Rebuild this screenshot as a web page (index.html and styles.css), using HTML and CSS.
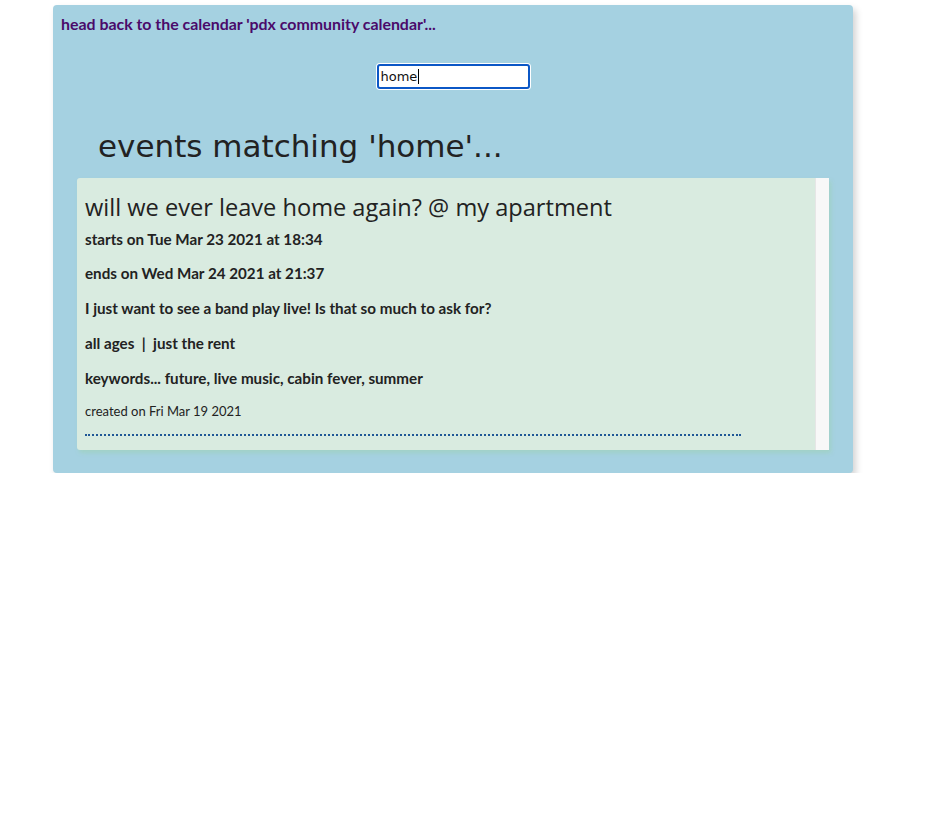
FILE: index.html
```html
<!DOCTYPE html>
<html>
<head>
<meta charset="utf-8">
<title>events matching 'home'</title>
<link rel="stylesheet" href="styles.css">
</head>
<body>
<main class="panel">
  <a class="back-link" href="#">head back to the calendar 'pdx community calendar'...</a>
  <div class="search-row">
    <div class="search-box"><span class="search-text">home</span><span class="caret"></span></div>
  </div>
  <h1 class="results-title">events matching 'home'...</h1>
  <section class="results">
    <div class="results-list">
      <article class="event">
        <h2 class="event-title">will we ever leave home again? @ my apartment</h2>
        <p class="event-line first">starts on Tue Mar 23 2021 at 18:34</p>
        <p class="event-line second">ends on Wed Mar 24 2021 at 21:37</p>
        <p class="event-line">I just want to see a band play live! Is that so much to ask for?</p>
        <p class="event-line">all ages &nbsp;|&nbsp; just the rent</p>
        <p class="event-line">keywords... future, live music, cabin fever, summer</p>
        <p class="event-created">created on Fri Mar 19 2021</p>
        <div class="event-rule"></div>
      </article>
    </div>
    <div class="scroll-track"></div>
  </section>
</main>
</body>
</html>
```

FILE: styles.css
```css
html, body {
  margin: 0;
  padding: 0;
  background: #ffffff;
}

body {
  font-family: "Lato", "Liberation Sans", sans-serif;
  color: #222222;
}

.panel {
  box-sizing: border-box;
  width: 800px;
  margin: 5px 0 0 53px;
  padding: 10px 24px 23px 24px;
  background: #a5d1e1;
  border-radius: 4px;
  box-shadow: 3px 4px 7px rgba(0, 0, 0, 0.18);
  display: flex;
  flex-direction: column;
}

.back-link {
  margin-left: -16px;
  font-family: "Lato", sans-serif;
  font-weight: 700;
  font-size: 15.9px;
  line-height: 18px;
  color: #4a0a6a;
  text-decoration: none;
  align-self: flex-start;
}

.search-row {
  display: flex;
  justify-content: center;
  margin-top: 31px;
}

.search-box {
  box-sizing: border-box;
  width: 153px;
  height: 25px;
  background: #ffffff;
  border: 2px solid #0b57c6;
  border-radius: 3px;
  box-shadow: 0 0 0 1px #ffffff;
  display: flex;
  align-items: center;
  padding-left: 2px;
  padding-bottom: 1px;
  font-family: "DejaVu Sans", sans-serif;
  font-size: 13px;
  color: #111;
}

.caret {
  display: inline-block;
  width: 1px;
  height: 15px;
  background: #000;
  margin-left: 1px;
}

.results-title {
  margin: 38px 0 13px 21px;
  font-family: "DejaVu Sans", sans-serif;
  font-weight: 400;
  font-size: 31px;
  line-height: 38px;
  color: #222222;
}

.results {
  display: flex;
  background: #d9ebe0;
  border-radius: 3px 0 0 3px;
  box-shadow: 2px 3px 4px rgba(160, 210, 195, 0.9);
}

.results-list {
  flex: 1;
  padding: 13px 8px 14px 8px;
}

.scroll-track {
  width: 13px;
  background: #f8f8f8;
  border-left: 1px solid #e6e6e6;
}

.event-title {
  margin: 0;
  font-family: "Open Sans", sans-serif;
  font-weight: 400;
  font-size: 23.6px;
  line-height: 32px;
  color: #222222;
}

.event-line {
  margin: 15px 0 0 0;
  font-family: "Lato", sans-serif;
  font-weight: 700;
  font-size: 15.2px;
  line-height: 20px;
  color: #222222;
}

.event-line.first {
  margin-top: 6px;
}

.event-line.second {
  margin-top: 14px;
}

.event-created {
  margin: 14px 0 0 0;
  font-family: "Lato", sans-serif;
  font-size: 13px;
  line-height: 18px;
  color: #222222;
}

.event-rule {
  width: 656px;
  margin-top: 14px;
  border-bottom: 2px dotted #1f5796;
}
```
